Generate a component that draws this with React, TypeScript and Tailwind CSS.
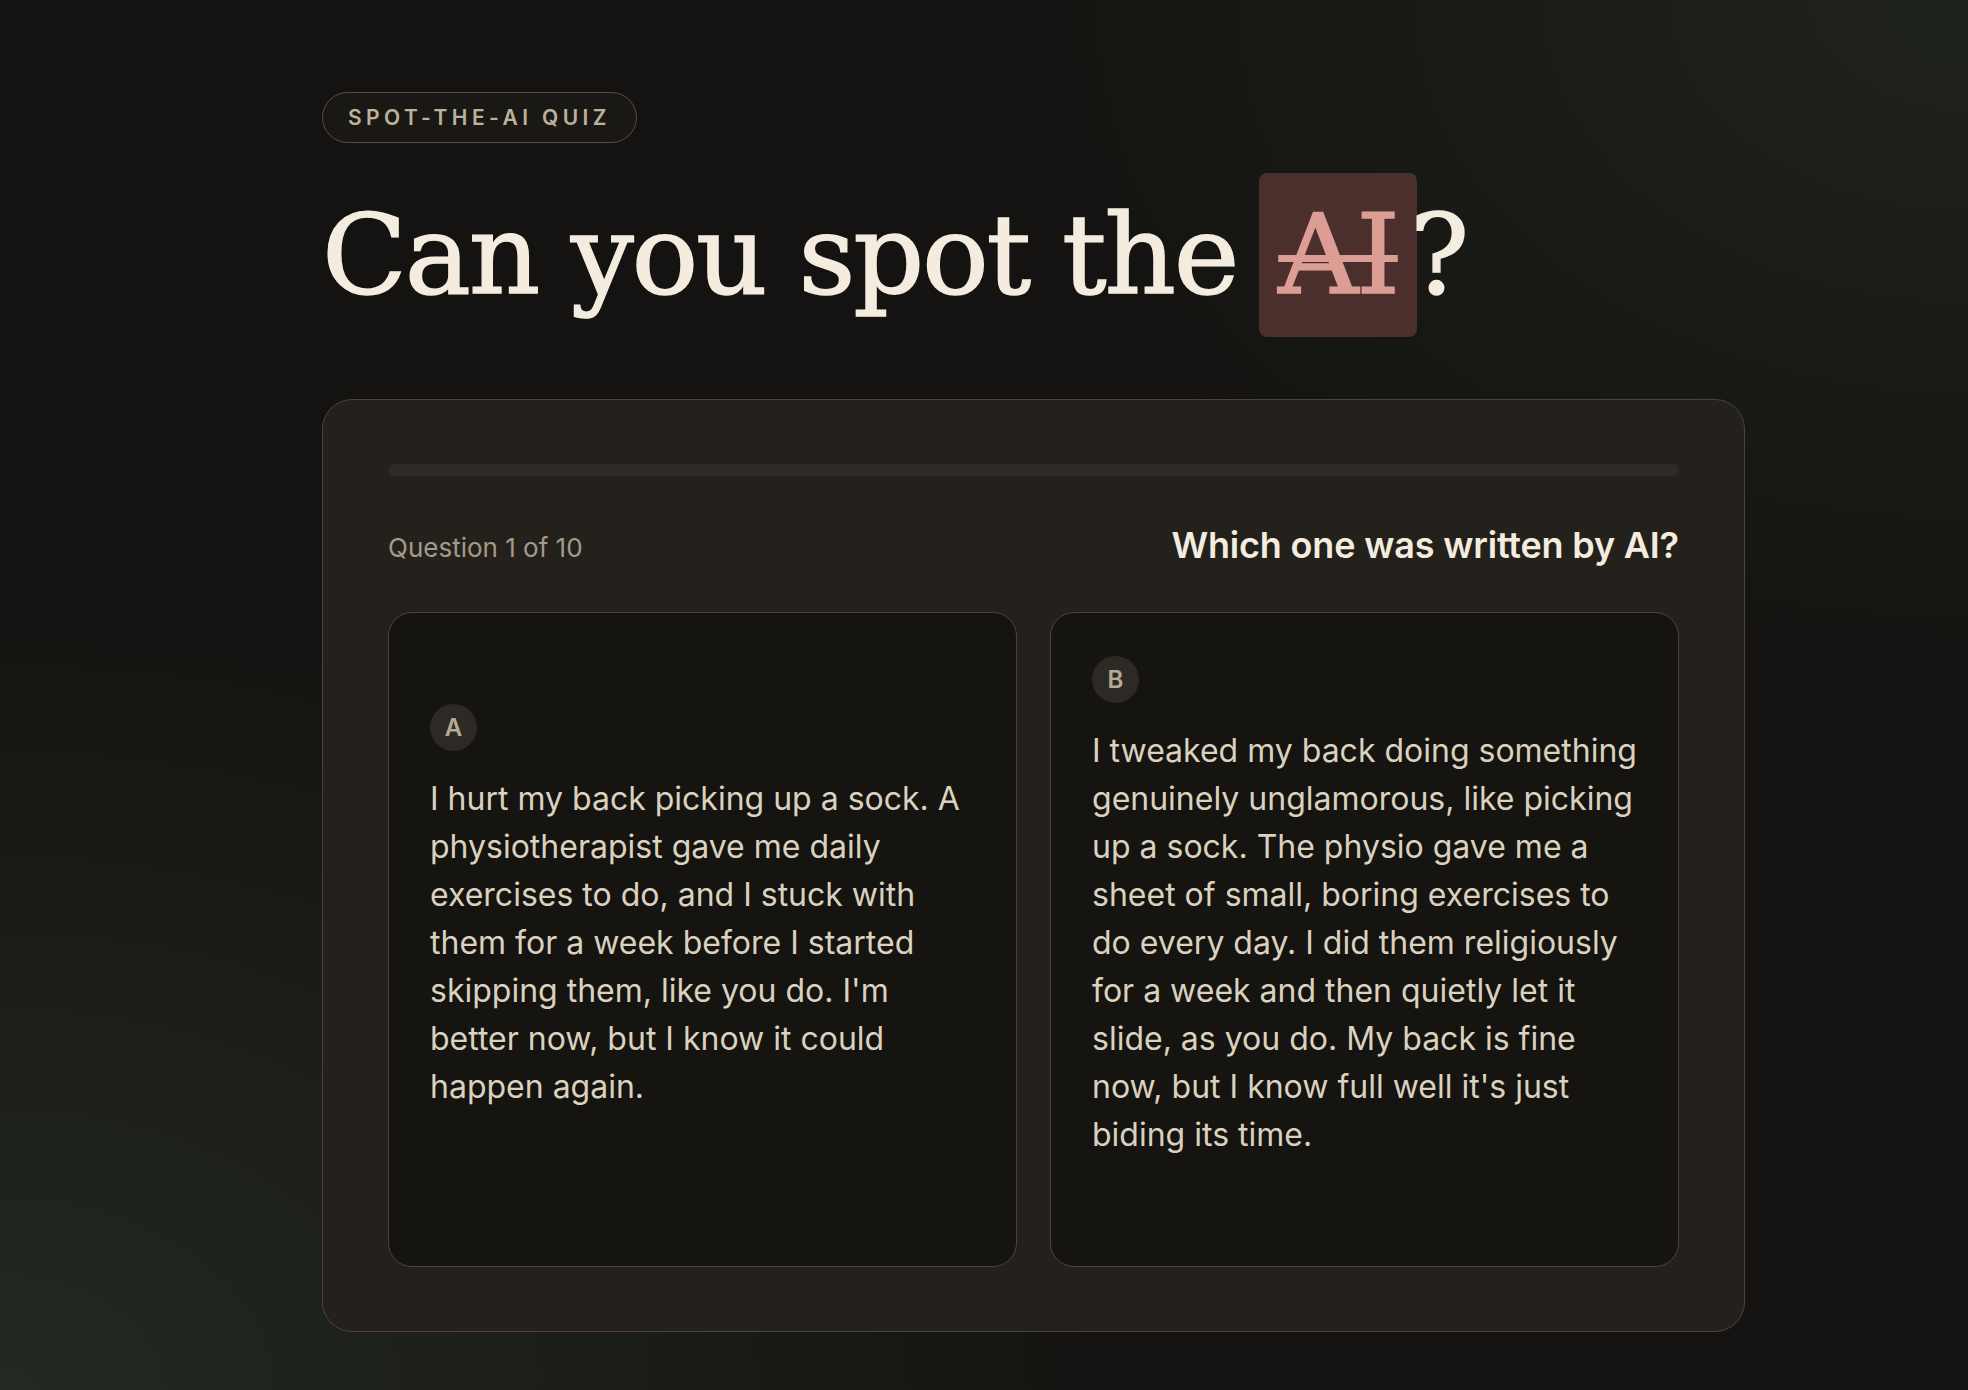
import React from 'react';

type Option = {
  id: string;
  text: string;
};

const OPTIONS: Option[] = [
  {
    id: 'A',
    text: "I hurt my back picking up a sock. A physiotherapist gave me daily exercises to do, and I stuck with them for a week before I started skipping them, like you do. I'm better now, but I know it could happen again.",
  },
  {
    id: 'B',
    text: "I tweaked my back doing something genuinely unglamorous, like picking up a sock. The physio gave me a sheet of small, boring exercises to do every day. I did them religiously for a week and then quietly let it slide, as you do. My back is fine now, but I know full well it's just biding its time.",
  },
];

const OptionCard: React.FC<{ option: Option }> = ({ option }) => (
  <button className="flex flex-col justify-center text-left rounded-[24px] border-[1.5px] border-[#4c4537] bg-[#151411] pt-[43px] pb-[107px] px-[41px]">
    <div className="w-[47px] h-[47px] rounded-full bg-[#2d2a25] flex items-center justify-center text-[24px] font-semibold text-[#b5ab95]">
      {option.id}
    </div>
    <p className="mt-[24px] text-[32px] leading-[48px] text-[#dbd1bf]">{option.text}</p>
  </button>
);

const App: React.FC = () => {
  return (
    <div className="min-h-screen w-full bg-[#141311] bg-[radial-gradient(ellipse_at_0%_100%,rgba(36,42,34,0.95),transparent_40%),radial-gradient(ellipse_at_100%_0%,rgba(32,36,30,0.95),transparent_35%)] font-['Inter',sans-serif] antialiased">
      <div className="ml-[322px] w-[1423px] pt-[92px] pb-[60px]">
        <span className="inline-flex items-center h-[51px] px-[25px] rounded-full border-[1.5px] border-[#585041] bg-[#1a1815] text-[21px] font-semibold tracking-[0.21em] text-[#bcb29c]">
          SPOT-THE-AI QUIZ
        </span>

        {/* heading serif is a touch heavier in the design, so thicken with a thin stroke */}
        <h1 className="mt-[30px] font-['DejaVu_Serif',serif] text-[111px] leading-[111px] tracking-[-0.02em] text-[#f3ecdf] [-webkit-text-stroke:1.5px_currentColor]">
          Can you spot the
          <span className="ml-[22px] inline-block h-[164px] leading-[164px] px-[19px] rounded-[8px] bg-[#4a2f2c] text-[#dc9d95] line-through decoration-[7px]">
            AI
          </span>
          <span className="ml-[-7px]">?</span>
        </h1>

        <section className="mt-[62px] rounded-[30px] border-[1.5px] border-[#4c4537] bg-[#24211d] px-[65px] pt-[64px] pb-[64px]">
          <div className="h-[12px] rounded-full bg-[#2e2b26]" />

          <div className="mt-[47px] h-[44px] flex items-center justify-between">
            <span className="text-[26px] leading-[30px] pt-[6px] text-[#a39a87]">Question 1 of 10</span>
            <h2 className="text-[36px] leading-[44px] font-semibold tracking-[-0.005em] text-[#f3ecdf]">
              Which one was written by AI?
            </h2>
          </div>

          <div className="mt-[45px] grid grid-cols-2 gap-[33px]">
            {OPTIONS.map(o => (
              <OptionCard key={o.id} option={o} />
            ))}
          </div>
        </section>
      </div>
    </div>
  );
};

export default App;
